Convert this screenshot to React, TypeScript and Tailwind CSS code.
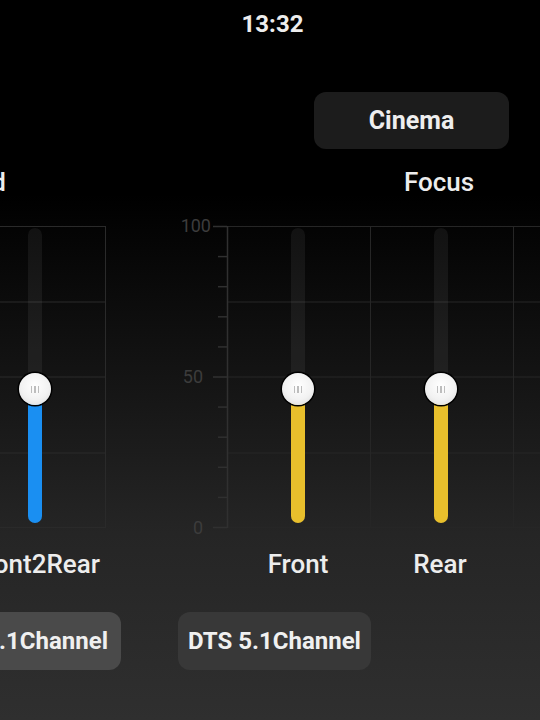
const font = { fontFamily: 'Roboto, "Noto Sans", sans-serif' };

type SliderProps = { color: string; knobTop: number };

function Slider({ color, knobTop }: SliderProps) {
  return (
    <div className="relative w-[32px] h-[302px] flex-none">
      <div className="absolute left-[9px] top-[2px] w-[14px] h-[295px] rounded-full bg-white/[0.06]" />
      <div
        className={`absolute left-[9px] w-[14px] bottom-[5px] rounded-full ${color}`}
        style={{ top: knobTop + 14 }}
      />
      <div
        className="absolute left-0 w-[32px] h-[32px] rounded-full bg-[radial-gradient(circle_at_50%_40%,#ffffff_0%,#f2f2f2_55%,#d9d9d9_100%)] shadow-[0_0_0_1.5px_#000] flex items-center justify-center gap-[2px]"
        style={{ top: knobTop }}
      >
        <span className="w-[1.5px] h-[7px] bg-[#bdbdbd]" />
        <span className="w-[1.5px] h-[7px] bg-[#bdbdbd]" />
        <span className="w-[1.5px] h-[7px] bg-[#bdbdbd]" />
      </div>
    </div>
  );
}

function Grid() {
  const rows = [0.5, 76, 151, 227, 301.5];
  const ticks = Array.from({ length: 11 }, (_, i) => 0.5 + i * 30.1);
  return (
    <svg className="absolute inset-0 overflow-visible" width={540} height={302}>
      {/* left panel box */}
      {rows.map(y => (
        <line key={'l' + y} x1={-10} x2={105} y1={y} y2={y} stroke="#2a2a2a" strokeWidth={1} />
      ))}
      <line x1={105.5} x2={105.5} y1={0} y2={302} stroke="#2a2a2a" strokeWidth={1} />

      {/* right panel grid */}
      {rows.map(y => (
        <line key={'r' + y} x1={227} x2={560} y1={y} y2={y} stroke="#262626" strokeWidth={1} />
      ))}
      <line x1={370.5} x2={370.5} y1={0} y2={302} stroke="#262626" strokeWidth={1} />
      <line x1={513.5} x2={513.5} y1={0} y2={302} stroke="#262626" strokeWidth={1} />
      <line x1={227.5} x2={227.5} y1={0} y2={302} stroke="#303030" strokeWidth={1.5} />
      {ticks.map((y, i) => (
        <line
          key={'t' + i}
          x1={i % 5 === 0 ? 213 : 218}
          x2={227}
          y1={y}
          y2={y}
          stroke="#303030"
          strokeWidth={1.5}
        />
      ))}
      <text x={211} y={6} textAnchor="end" fill="#3c3c3c" fontSize={18} style={font}>100</text>
      <text x={203} y={157} textAnchor="end" fill="#3c3c3c" fontSize={18} style={font}>50</text>
      <text x={203} y={308} textAnchor="end" fill="#3c3c3c" fontSize={18} style={font}>0</text>
    </svg>
  );
}

export default function App() {
  return (
    <div
      className="w-[540px] h-[720px] overflow-hidden flex flex-col text-[#ededed] bg-[linear-gradient(180deg,#000_0%,#000_27%,#252525_74%,#2f2f2f_100%)]"
      style={font}
    >
      {/* Status bar */}
      <div className="h-[48px] flex items-center justify-center pl-[5px] text-[24px] font-bold">13:32</div>

      {/* Preset */}
      <div className="mt-[44px] pl-[314px] flex">
        <button className="w-[195px] h-[57px] rounded-[12px] bg-[#1c1c1c] text-[25px] font-bold text-[#eeeeee]">
          Cinema
        </button>
      </div>

      {/* Titles */}
      <div className="mt-[13px] h-[40px] flex items-center text-[26px] font-medium">
        <div className="w-[6px] flex-none flex justify-end whitespace-nowrap">Surround</div>
        <div className="ml-[373px] w-[120px] flex-none text-center">Focus</div>
      </div>

      {/* Chart */}
      <div className="mt-[24px] h-[302px] relative flex-none">
        <Grid />
        <div className="relative flex pl-[19px]">
          <Slider color="bg-[#1a8ff2]" knobTop={147} />
          <div className="ml-[231px]">
            <Slider color="bg-[#e8bf2c]" knobTop={147} />
          </div>
          <div className="ml-[111px]">
            <Slider color="bg-[#e8bf2c]" knobTop={147} />
          </div>
        </div>
      </div>

      {/* Labels */}
      <div className="mt-[20px] h-[32px] flex items-center text-[26px] font-medium whitespace-nowrap">
        <div className="w-[100px] flex-none flex justify-end">Front2Rear</div>
        <div className="ml-[138px] w-[120px] flex-none flex justify-center">Front</div>
        <div className="ml-[22px] w-[120px] flex-none flex justify-center">Rear</div>
      </div>

      {/* Sources */}
      <div className="mt-[32px] h-[58px] flex text-[24px] font-bold whitespace-nowrap">
        <div className="w-[121px] flex-none flex justify-end">
          <button className="h-[58px] px-[13px] rounded-[12px] bg-[#4a4a4a] text-[#f0f0f0] flex-none">
            Dolby 5.1Channel
          </button>
        </div>
        <button className="ml-[57px] h-[58px] px-[10px] rounded-[12px] bg-[#383838] text-[#f0f0f0] flex-none">
          DTS 5.1Channel
        </button>
      </div>
    </div>
  );
}
